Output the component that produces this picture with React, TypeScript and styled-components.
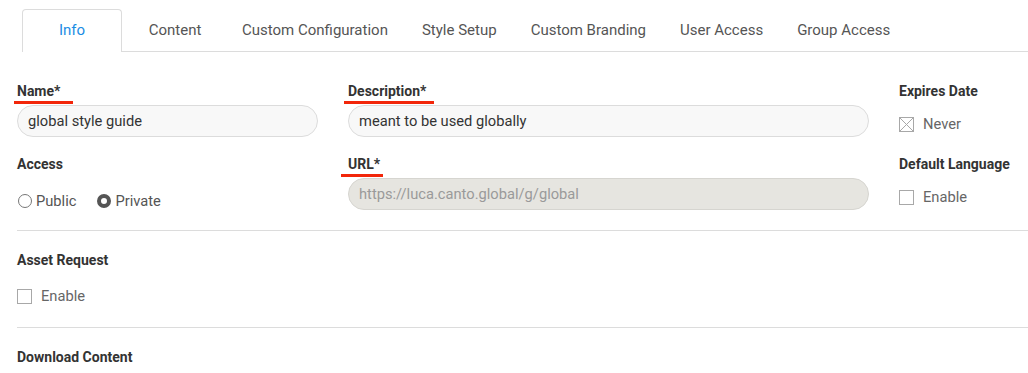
import styled, { createGlobalStyle } from "styled-components";

const GlobalStyle = createGlobalStyle`
  body {
    margin: 0;
    background: #fff;
    font-family: Roboto, "Liberation Sans", Arial, sans-serif;
    color: #333;
  }
`;

const tabs = [
  "Info",
  "Content",
  "Custom Configuration",
  "Style Setup",
  "Custom Branding",
  "User Access",
  "Group Access",
];

const App = () => {
  return (
    <>
      <GlobalStyle />
      <Page>
        <TabBar>
          {tabs.map((tab, i) => (
            <Tab key={tab} active={i === 0}>
              {tab}
            </Tab>
          ))}
        </TabBar>

        <Section>
          <FormGrid>
            <Column>
              <Field>
                <Label marker={{ left: -3, width: 59 }}>Name*</Label>
                <Input>global style guide</Input>
              </Field>
              <Field>
                <Label>Access</Label>
                <RadioRow>
                  <RadioOption>
                    <Radio />
                    Public
                  </RadioOption>
                  <RadioOption>
                    <Radio checked />
                    Private
                  </RadioOption>
                </RadioRow>
              </Field>
            </Column>

            <Column>
              <Field>
                <Label marker={{ left: -4, width: 90 }}>Description*</Label>
                <Input>meant to be used globally</Input>
              </Field>
              <Field>
                <Label marker={{ left: -7, width: 42 }}>URL*</Label>
                <Input disabled>https://luca.canto.global/g/global</Input>
              </Field>
            </Column>

            <Column>
              <Field>
                <Label>Expires Date</Label>
                <CheckRow>
                  <Checkbox crossed />
                  Never
                </CheckRow>
              </Field>
              <Field>
                <Label>Default Language</Label>
                <CheckRow>
                  <Checkbox />
                  Enable
                </CheckRow>
              </Field>
            </Column>
          </FormGrid>
        </Section>

        <Section>
          <Label>Asset Request</Label>
          <SingleCheck>
            <Checkbox />
            Enable
          </SingleCheck>
        </Section>

        <Section>
          <Label>Download Content</Label>
        </Section>
      </Page>
    </>
  );
};

const Checkbox = ({ crossed }: { crossed?: boolean }) => (
  <CheckBoxIcon width="15" height="15" viewBox="0 0 15 15">
    <rect x="0.5" y="0.5" width="14" height="14" fill="#fff" stroke="#a8a8a8" />
    {crossed && (
      <path d="M1 1 L14 14 M14 1 L1 14" stroke="#a8a8a8" strokeWidth="1" />
    )}
  </CheckBoxIcon>
);

const Page = styled.div`
  padding-left: 17px;
`;
const TabBar = styled.div`
  display: flex;
  margin-left: 5px;
  padding-top: 9px;
  border-bottom: 1px solid #dcdcdc;
`;
const Tab = styled.div<{ active?: boolean }>`
  min-width: 100px;
  box-sizing: border-box;
  height: 43px;
  padding: 0 16px 2px;
  margin-right: ${(p) => (p.active ? "3px" : "0")};
  display: flex;
  align-items: center;
  justify-content: center;
  font-size: 15px;
  color: ${(p) => (p.active ? "#1b8de4" : "#555")};
  background: ${(p) => (p.active ? "#fff" : "transparent")};
  border: 1px solid ${(p) => (p.active ? "#dcdcdc" : "transparent")};
  border-bottom: none;
  border-radius: 4px 4px 0 0;
  margin-bottom: -1px;
`;
const Section = styled.div`
  padding: 20px 0;
  & + & {
    border-top: 1px solid #dcdcdc;
  }
`;
const FormGrid = styled.div`
  display: grid;
  grid-template-columns: 301px 521px 1fr;
  column-gap: 30px;
  padding-top: 10px;
`;
const Column = styled.div`
  display: flex;
  flex-direction: column;
  gap: 18px;
`;
const Field = styled.div`
  display: flex;
  flex-direction: column;
  gap: 6px;
`;
const Label = styled.div<{ marker?: { left: number; width: number } }>`
  position: relative;
  padding-top: 1px;
  font-size: 14px;
  line-height: 16px;
  font-weight: 700;
  color: #333;
  &::after {
    content: "";
    display: ${(p) => (p.marker ? "block" : "none")};
    position: absolute;
    left: ${(p) => p.marker?.left ?? 0}px;
    width: ${(p) => p.marker?.width ?? 0}px;
    top: 19px;
    height: 3px;
    background: #f2260a;
  }
`;
const Input = styled.div<{ disabled?: boolean }>`
  height: 32px;
  box-sizing: border-box;
  border-radius: 16px;
  border: 1px solid ${(p) => (p.disabled ? "#d6d5d0" : "#dcdcdc")};
  background: ${(p) => (p.disabled ? "#e6e5e0" : "#f8f8f8")};
  color: ${(p) => (p.disabled ? "#9a9a9a" : "#333")};
  font-size: 14.7px;
  padding: 0 10px;
  display: flex;
  align-items: center;
`;
const RadioRow = styled.div`
  display: flex;
  align-items: center;
  gap: 20px;
  height: 32px;
  padding-top: 13px;
  box-sizing: border-box;
`;
const RadioOption = styled.label`
  display: flex;
  align-items: center;
  gap: 4px;
  font-size: 14.7px;
  color: #555;
`;
const Radio = styled.span<{ checked?: boolean }>`
  width: 14px;
  height: 14px;
  box-sizing: border-box;
  border-radius: 50%;
  border: ${(p) => (p.checked ? "4px solid #555" : "1px solid #777")};
  background: #fff;
  margin-left: 1px;
`;
const CheckRow = styled.div`
  display: flex;
  align-items: center;
  gap: 9px;
  height: 32px;
  padding-top: 6px;
  box-sizing: border-box;
  font-size: 14.7px;
  color: #666;
`;
const SingleCheck = styled(CheckRow)`
  height: 22px;
  padding-top: 0;
  margin-top: 17px;
`;
const CheckBoxIcon = styled.svg`
  display: block;
  flex: none;
`;

export default App;
